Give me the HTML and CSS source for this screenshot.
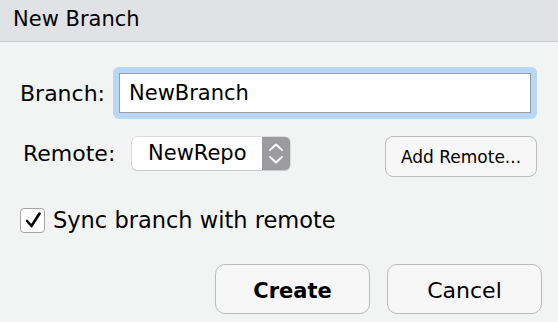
FILE: index.html
```html
<!DOCTYPE html>
<html lang="en">

<head>
    <meta charset="UTF-8">
    <title>New Branch</title>
    <link rel="stylesheet" href="styles.css">
</head>

<body>
    <div class="dialog">
        <div class="titlebar">New Branch</div>
        <div class="content">
            <div class="row row-branch">
                <label class="label" for="branch">Branch:</label>
                <span class="focus-ring">
                    <input id="branch" class="text-input" type="text" value="NewBranch">
                </span>
            </div>
            <div class="row row-remote">
                <div class="remote-group">
                    <span class="label label-remote">Remote:</span>
                    <div class="select">
                        <span class="select-value">NewRepo</span>
                        <span class="stepper">
                            <svg width="28" height="33" viewBox="0 0 28 33">
                                <path d="M8 13 L14 7.5 L20 13" fill="none" stroke="#fff" stroke-width="2" stroke-linecap="round" stroke-linejoin="round" />
                                <path d="M8 20 L14 25.5 L20 20" fill="none" stroke="#fff" stroke-width="2" stroke-linecap="round" stroke-linejoin="round" />
                            </svg>
                        </span>
                    </div>
                </div>
                <button class="btn btn-small">Add Remote...</button>
            </div>
            <div class="row row-sync">
                <span class="checkbox">
                    <svg width="22" height="22" viewBox="0 0 22 22">
                        <path d="M5 12 L9.5 17 L17.5 4.5" fill="none" stroke="#000" stroke-width="2.6" stroke-linecap="round" stroke-linejoin="round" />
                    </svg>
                </span>
                <span class="check-label">Sync branch with remote</span>
            </div>
            <div class="row row-actions">
                <button class="btn btn-big btn-default">Create</button>
                <button class="btn btn-big">Cancel</button>
            </div>
        </div>
    </div>
</body>

</html>
```

FILE: styles.css
```css
* {
    margin: 0;
    padding: 0;
    box-sizing: border-box;
}

body {
    background: #f2f3f3;
    font-family: "DejaVu Sans", "Noto Sans", sans-serif;
    color: #000;
}

.titlebar {
    height: 42px;
    line-height: 39px;
    padding-left: 13px;
    font-size: 21px;
    background: #e1e2e5;
    border-bottom: 1px solid #cbccd0;
}

.content {
    padding: 25px 16px 0 20px;
}

.row {
    display: flex;
    align-items: center;
}

.label {
    font-size: 22px;
}

/* 分支名输入框 */
.row-branch .label {
    width: 93px;
}

.focus-ring {
    display: block;
    padding: 6px;
    background: #b8d7f6;
    border-radius: 6px;
}

.text-input {
    display: block;
    width: 412px;
    height: 40px;
    padding-left: 9px;
    border: 1.5px solid #979ca3;
    font-family: inherit;
    font-size: 21px;
    color: #000;
    background: #fff;
    outline: none;
}

/* 远程仓库 */
.row-remote {
    margin-top: 17px;
    align-items: flex-start;
    padding-right: 5px;
}

.remote-group {
    display: flex;
    align-items: center;
    height: 33px;
    margin-top: 1px;
}

.label-remote {
    width: 112px;
    padding-left: 3px;
}

.select {
    display: flex;
    width: 158px;
    height: 33px;
    background: #fff;
    border-radius: 5px;
    box-shadow: 0 0 0 0.5px #c4c4c6, 0 1px 1px rgba(0, 0, 0, 0.15);
    overflow: hidden;
}

.select-value {
    flex: 1;
    padding-left: 16px;
    line-height: 33px;
    font-size: 21px;
}

.stepper {
    display: block;
    width: 28px;
    height: 33px;
    background: #9c9ca0;
}

.stepper svg {
    display: block;
}

.btn {
    font-family: inherit;
    color: #000;
    background: #f7f7f8;
    border: 1.5px solid #bbbbbd;
}

.btn-small {
    margin-left: auto;
    width: 152px;
    height: 41px;
    font-size: 17px;
    border-radius: 8px;
}

/* 同步复选框 */
.row-sync {
    margin-top: 30px;
}

.checkbox {
    display: flex;
    align-items: center;
    justify-content: center;
    width: 25px;
    height: 25px;
    background: #fff;
    border: 1.5px solid #a3a3a5;
    border-radius: 4px;
}

.check-label {
    margin-left: 8px;
    font-size: 22.5px;
}

/* 底部按钮 */
.row-actions {
    margin-top: 31px;
    justify-content: flex-end;
    gap: 17px;
}

.btn-big {
    width: 155px;
    height: 50px;
    padding-top: 3px;
    font-size: 22px;
    border-radius: 10px;
}

.btn-default {
    font-weight: bold;
    font-size: 21px;
}
```
